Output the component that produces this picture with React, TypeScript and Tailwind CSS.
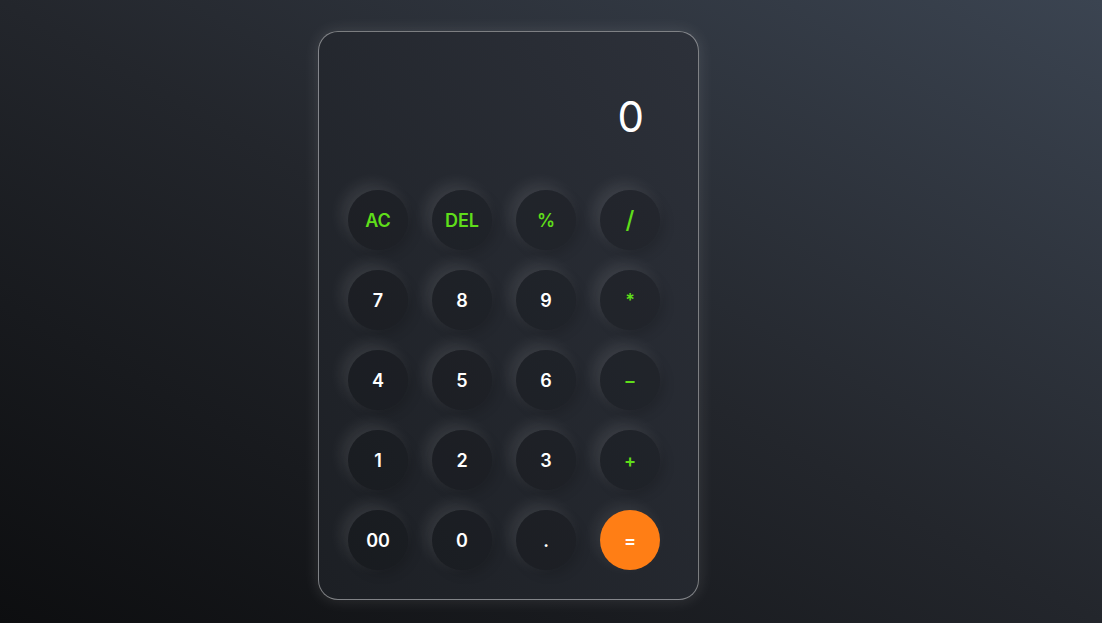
import React from 'react';

type Key = { label: string; kind: 'op' | 'num' | 'eq' };

const KEYS: Key[] = [
  { label: 'AC', kind: 'op' },
  { label: 'DEL', kind: 'op' },
  { label: '%', kind: 'op' },
  { label: '/', kind: 'op' },
  { label: '7', kind: 'num' },
  { label: '8', kind: 'num' },
  { label: '9', kind: 'num' },
  { label: '*', kind: 'op' },
  { label: '4', kind: 'num' },
  { label: '5', kind: 'num' },
  { label: '6', kind: 'num' },
  { label: '-', kind: 'op' },
  { label: '1', kind: 'num' },
  { label: '2', kind: 'num' },
  { label: '3', kind: 'num' },
  { label: '+', kind: 'op' },
  { label: '00', kind: 'num' },
  { label: '0', kind: 'num' },
  { label: '.', kind: 'num' },
  { label: '=', kind: 'eq' },
];

function CalcKey({ k }: { k: Key }) {
  if (k.kind === 'eq') {
    return (
      <button
        type="button"
        className="flex size-[60px] items-center justify-center rounded-full bg-[#ff7e15] text-[18px] font-semibold text-white shadow-[-5px_-5px_15px_rgba(255,255,255,0.08)]"
      >
        {k.label}
      </button>
    );
  }
  let content: React.ReactNode = k.label;
  if (k.label === '/') content = <span className="text-[24px] font-medium">/</span>;
  if (k.label === '-') content = <span className="font-bold">–</span>;
  return (
    <button
      type="button"
      className={
        'flex size-[60px] items-center justify-center rounded-full bg-[rgba(0,0,0,0.14)] text-[18px] font-semibold shadow-[-6px_-6px_15px_rgba(255,255,255,0.1),4px_4px_12px_rgba(0,0,0,0.15)] ' +
        (k.kind === 'op' ? 'text-[#5fde1a]' : 'text-white')
      }
    >
      {content}
    </button>
  );
}

export default function App() {
  return (
    <div
      className="h-[623px] w-full overflow-hidden bg-gradient-to-tr from-[#0d0e10] via-[#23262c] to-[#3b4451] pl-[318px] pt-[31px]"
      style={{ fontFamily: 'Inter, "Open Sans", sans-serif' }}
    >
      <div className="w-[381px] rounded-[20px] border border-[rgba(255,255,255,0.42)] bg-gradient-to-tr from-[#1c1f24] to-[#2d313a] shadow-[0_0_16px_rgba(255,255,255,0.12)]">
        <div className="flex h-[158px] items-center justify-end pr-[54px] pt-[10px] text-[42px] font-normal text-white">
          0
        </div>
        <div className="grid grid-cols-[repeat(4,60px)] gap-x-[24px] gap-y-[20px] pb-[29px] pl-[29px]">
          {KEYS.map((k) => (
            <CalcKey key={k.label} k={k} />
          ))}
        </div>
      </div>
    </div>
  );
}
